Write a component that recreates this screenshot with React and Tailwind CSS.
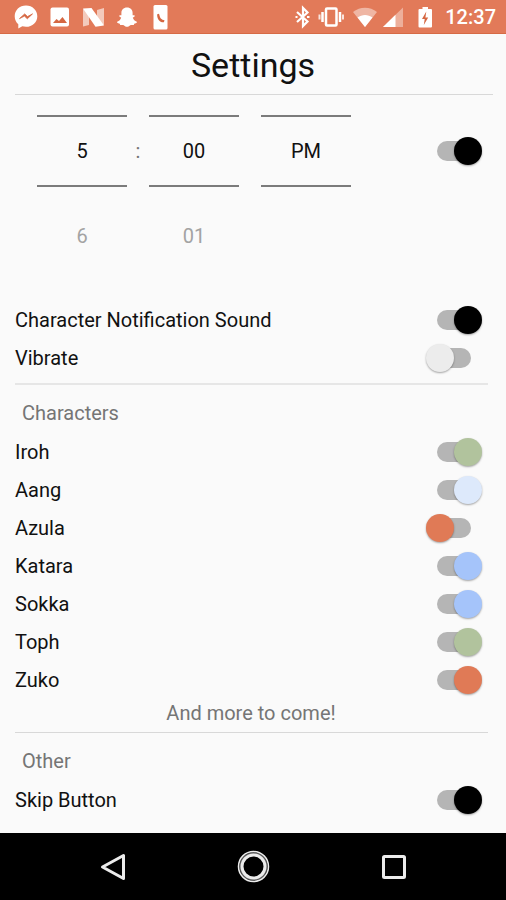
import { useState } from "react";

const characters = [
  { name: "Iroh", on: true, color: "after:bg-[#b1c39d]" },
  { name: "Aang", on: true, color: "after:bg-[#dde9fb]" },
  { name: "Azula", on: false, color: "after:bg-[#e07a56]" },
  { name: "Katara", on: true, color: "after:bg-[#a5c4fa]" },
  { name: "Sokka", on: true, color: "after:bg-[#a5c4fa]" },
  { name: "Toph", on: true, color: "after:bg-[#b1c39d]" },
  { name: "Zuko", on: true, color: "after:bg-[#e07a56]" },
];

const Switch = ({ defaultOn, color, ...props }) => {
  const [on, setOn] = useState(defaultOn);

  return (
    <input
      type="checkbox"
      role="switch"
      checked={on}
      onChange={(e) => setOn(e.target.checked)}
      className={`relative h-7 w-14 shrink-0 cursor-pointer appearance-none before:absolute before:inset-x-[11px] before:inset-y-1 before:rounded-full before:bg-[#b5b5b5] after:absolute after:top-0 after:left-0 after:size-7 after:rounded-full after:shadow-[0_1px_2px_rgba(0,0,0,0.35)] checked:after:left-7 ${color}`}
      {...props}
    />
  );
};

const SettingRow = ({ id, label, on, color }) => (
  <div className="flex h-[38px] items-center justify-between pr-6 pl-[15px]">
    <label htmlFor={id}>{label}</label>
    <Switch id={id} defaultOn={on} color={color} />
  </div>
);

const SectionTitle = ({ children }) => (
  <h2 className="flex h-12 items-center px-[22px] pt-2 text-[#757575]">{children}</h2>
);

const PickerColumn = ({ label, value, next }) => (
  <div className="flex w-[90px] flex-col">
    <input
      aria-label={label}
      defaultValue={value}
      className="h-[72px] w-full border-y-2 border-[#7b7b7b] bg-transparent text-center outline-none"
    />
    {next && (
      <button type="button" className="mt-6 h-[50px] text-[#a3a3a3]">
        {next}
      </button>
    )}
  </div>
);

const StatusBar = () => (
  <div className="flex h-[34px] items-center justify-between border-b border-[#d66a45] bg-[#e27a59] pr-[10px] pl-[14px] text-white">
    <div className="flex items-center gap-3">
      {/* Messenger */}
      <svg width="24" height="26" viewBox="0 0 24 26" fill="currentColor">
        <path d="M12 1.5C5.500 1.500.7 6.200.7 12.200c0 3.300 1.400 6.100 3.600 8v4.300l4-2.200c1.200.3 2.400.5 3.700.5 6.500 0 11.300-4.700 11.300-10.600S18.500 1.500 12 1.500z" />
        <path d="M5.500 14.600l5.200-4.700 2.800 2.700 5-2.700-5.200 4.900-2.800-2.700z" fill="#d56742" stroke="#d56742" strokeWidth="0.8" />
      </svg>
      {/* Photo */}
      <svg width="20" height="26" viewBox="0 0 20 26">
        <rect x="0.500" y="3.500" width="18.500" height="19" rx="2" fill="currentColor" />
        <path d="M3 19l3.500-4 2.500 2 3.500-4L17 19z" fill="#d56742" />
      </svg>
      {/* Android N */}
      <svg width="22" height="26" viewBox="0 0 22 26" fill="currentColor">
        <path d="M1 5l6 1v15L1 22.500zM15 6l7-2v17l-7-1z" opacity="0.6" />
        <path d="M1 4.500L9.500 4 22 21.500l-8.500 1.300z" />
      </svg>
      {/* Snapchat */}
      <svg width="22" height="26" viewBox="0 0 22 26" fill="currentColor">
        <path d="M11 3.500c-3.600 0-5.600 2.400-5.600 5.500v2.300c-.8.200-1.700-.3-2.100.4-.4.900.9 1.400 1.900 1.900-.6 2-2 3.700-4 4.200-.6.300.1 1.500 2.600 1.900.3.500.1 1.300.7 1.400.9.100 2-.4 3.200.1 1 .5 1.700 1.600 3.300 1.600s2.300-1.100 3.300-1.600c1.200-.5 2.300 0 3.200-.1.600-.1.400-.9.700-1.400 2.500-.4 3.200-1.600 2.600-1.900-2-.5-3.400-2.200-4-4.200 1-.5 2.300-1 1.900-1.900-.4-.7-1.300-.2-2.100-.4V9c0-3.100-2-5.500-5.600-5.500z" />
      </svg>
      {/* Call screen */}
      <svg width="18" height="26" viewBox="0 0 18 26">
        <rect x="3.500" y="1" width="14" height="24.500" rx="1.500" fill="currentColor" />
        <path d="M7.200 10.200l1.800-.4.800 2.800c.4 1.500 1.300 2.600 2.700 3.100l2 .6-.6 1.900c-3.800.5-7.200-3.400-6.700-8z" fill="#d56742" />
      </svg>
    </div>

    <div className="flex items-center gap-[6px]">
      {/* Bluetooth */}
      <svg width="17" height="24" viewBox="0 0 17 24" fill="none" stroke="currentColor" strokeWidth="2.200">
        <path d="M2 7l10.500 9.500L8 21V3l4.500 4.500L2 17" />
        <path d="M0.500 12h2M12 12h2.500" />
      </svg>
      {/* Vibrate */}
      <svg width="29" height="24" viewBox="0 0 29 24" fill="none" stroke="currentColor">
        <rect x="8" y="3.500" width="10.500" height="17" rx="1" strokeWidth="2.500" />
        <path d="M4.500 7v10M22 7v10" strokeWidth="2.500" />
        <path d="M1.500 9.500v5M25 9.500v5" strokeWidth="2" opacity="0.8" />
      </svg>
      {/* Wifi */}
      <svg width="24" height="24" viewBox="0 0 24 24" fill="currentColor">
        <path d="M12 22L0 7C7 1.200 17 1.200 24 7z" opacity="0.45" />
        <path d="M12 22L4.500 12.500c4.500-3.400 10.500-3.400 15 0z" />
      </svg>
      {/* Signal */}
      <svg width="20" height="24" viewBox="0 0 20 24" fill="currentColor">
        <path d="M0 22L20 2.500V22z" opacity="0.4" />
        <path d="M0 22L12.500 9.800V22z" />
      </svg>
      {/* Battery */}
      <svg width="30" height="24" viewBox="0 0 30 24">
        <path d="M13.500 2h5.500v2h3a1 1 0 0 1 1 1v16.500a1 1 0 0 1-1 1H10.500a1 1 0 0 1-1-1V5a1 1 0 0 1 1-1h3z" fill="currentColor" />
        <path d="M17.300 6.500L13 14h2.700l-.9 6 4.400-7.500h-2.800z" fill="#d56742" />
      </svg>
      <time className="text-[20px] leading-6 font-medium">12:37</time>
    </div>
  </div>
);

const NavBar = () => (
  <nav className="mt-auto flex h-[67px] items-center bg-black px-[43px] text-[#ececec]">
    <button type="button" aria-label="Back" className="flex flex-1 justify-center">
      <svg width="34" height="34" viewBox="0 0 34 34" fill="none" stroke="currentColor" strokeWidth="3">
        <path d="M27.500 5.500v23L6.500 17z" strokeLinejoin="round" />
      </svg>
    </button>
    <button type="button" aria-label="Home" className="flex flex-1 justify-center">
      <svg width="34" height="34" viewBox="0 0 34 34" fill="none" stroke="currentColor">
        <circle cx="17.500" cy="16.500" r="15" strokeWidth="1.500" />
        <circle cx="17.500" cy="16.500" r="13" strokeWidth="2" opacity="0.4" />
        <circle cx="17.500" cy="16.500" r="11.500" strokeWidth="3" />
      </svg>
    </button>
    <button type="button" aria-label="Recent apps" className="flex flex-1 justify-center">
      <svg width="34" height="34" viewBox="0 0 34 34" fill="none" stroke="currentColor" strokeWidth="3">
        <rect x="7.500" y="6.500" width="21" height="21" rx="1" />
      </svg>
    </button>
  </nav>
);

const App = () => {
  return (
    <div className="flex min-h-screen flex-col bg-[#fafafa] font-['Roboto',sans-serif] text-[20px] leading-6 text-[#111]">
      <StatusBar />

      <h1 className="flex h-[60px] items-center justify-center pt-[2px] text-[34px] leading-10">Settings</h1>
      <hr className="mr-[13px] ml-[15px] border-[#d8d8d8]" />

      <main>
        {/* Notification time */}
        <div className="flex items-start justify-between pt-5 pr-6 pb-10 pl-[37px]">
          <div className="flex">
            <PickerColumn label="Hour" value="5" next="6" />
            <span className="flex h-[72px] w-[22px] items-center justify-center text-[#757575]">:</span>
            <PickerColumn label="Minute" value="00" next="01" />
            <span className="w-[22px]" />
            <PickerColumn label="AM or PM" value="PM" />
          </div>
          <div className="flex h-[72px] items-center">
            <Switch aria-label="Daily notification" defaultOn color="after:bg-black" />
          </div>
        </div>

        <SettingRow id="sound" label="Character Notification Sound" on color="after:bg-black" />
        <SettingRow id="vibrate" label="Vibrate" on={false} color="after:bg-[#ececec]" />

        <hr className="mt-[6px] mr-[18px] ml-[15px] border-t-2 border-[#e6e6e6]" />
        <SectionTitle>Characters</SectionTitle>
        {characters.map((c) => (
          <SettingRow key={c.name} id={c.name} label={c.name} on={c.on} color={c.color} />
        ))}
        <p className="pt-[2px] pr-1 text-center text-[#757575]">And more to come!</p>

        <hr className="mt-[7px] mr-[18px] ml-[15px] border-[#d8d8d8]" />
        <SectionTitle>Other</SectionTitle>
        <SettingRow id="skip" label="Skip Button" on color="after:bg-black" />
      </main>

      <NavBar />
    </div>
  );
};

export default App;
